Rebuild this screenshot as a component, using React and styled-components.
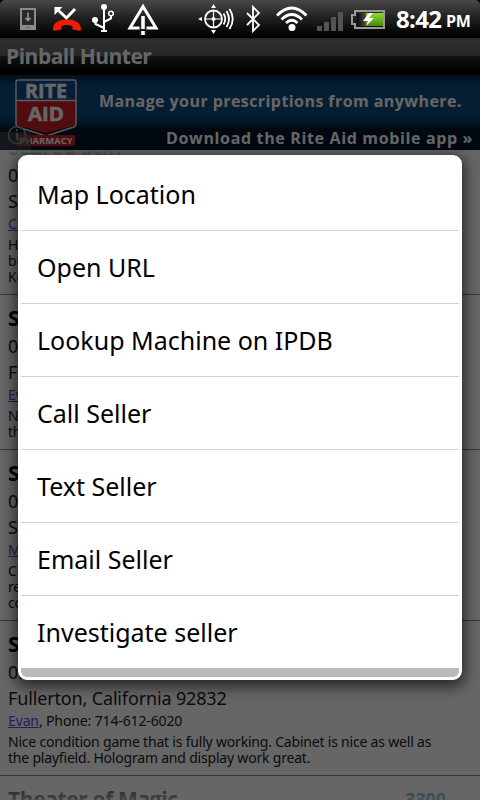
import styled, { createGlobalStyle } from 'styled-components'

const actions = [
  'Map Location',
  'Open URL',
  'Lookup Machine on IPDB',
  'Call Seller',
  'Text Seller',
  'Email Seller',
  'Investigate seller',
]

const listings = [
  {
    title: 'Scared Stiff',
    distance: '0',
    place: 'S',
    seller: 'Cl',
    lines: ['H', 'bu', 'Ke'],
  },
  {
    title: 'S',
    distance: '0',
    place: 'F',
    seller: 'Ev',
    lines: ['N', 'th'],
  },
  {
    title: 'S',
    distance: '0',
    place: 'S',
    seller: 'M',
    lines: ['Cl', 're', 'co'],
  },
  {
    title: 'S',
    distance: '0.',
    place: 'Fullerton, California 92832',
    seller: 'Evan',
    phone: '714-612-6020',
    lines: [
      'Nice condition game that is fully working. Cabinet is nice as well as',
      'the playfield. Hologram and display work great.',
    ],
  },
]

const StatusBar = () => (
  <Status>
    <LeftIcons>
      <svg width="160" height="38" viewBox="0 0 160 38" fill="none">
        <path d="M20 8h16v22H20z" fill="#8b8b8b" />
        <path d="M22 10h12v15H22z" fill="#292929" />
        <path d="M28 12.500v8M25.500 18 28 20.500l2.500-2.500" stroke="#999" strokeWidth="1.500" />
        <path d="M26 27.500h4" stroke="#666" />
        <path d="m58 10 8.500 8 8.500-9" stroke="#fff" strokeWidth="3" />
        <path d="M54.500 7h8l-8 8z" fill="#fff" />
        <path d="M53 29c0-5 4-9.500 14-9.500S81 24 81 29l-.5 2-8-1.500V26c-3-1.500-8-1.500-11 0v3.500l-8 1.500z" fill="#ee1c05" />
        <path d="M104 7v24M104 28l-8.500-4v-4M104 22l7-3.500V15" stroke="#fff" strokeWidth="2" />
        <path d="M101 31h6" stroke="#fff" strokeWidth="2" />
        <circle cx="104" cy="7" r="3" fill="#fff" />
        <circle cx="95" cy="20" r="3" fill="#fff" />
        <circle cx="111" cy="13.500" r="2.300" stroke="#fff" strokeWidth="1.500" />
        <path d="M143 6.500 130 28h26z" stroke="#fff" strokeWidth="3" />
        <path d="M143 16v19" stroke="#1a1a1a" strokeWidth="7" />
        <path d="M143 16v13M143 31v4" stroke="#fff" strokeWidth="3.600" />
      </svg>
    </LeftIcons>
    <RightIcons>
      <svg width="194" height="38" viewBox="196 0 194 38" fill="none">
        <circle cx="213.500" cy="19" r="8.500" stroke="#fff" strokeWidth="1.800" />
        <path d="M205 19h17M213.500 10.500v17" stroke="#fff" strokeWidth="1.200" />
        <circle cx="213.500" cy="19" r="2" fill="#fff" />
        <path d="m213.500 4 2.500 4h-5zM213.500 34l2.500-4h-5zM198 19l4-2v4z" fill="#fff" />
        <path d="M223.500 13.500q3.500 5.500 0 11M226.500 11q5 8 0 16M229.500 9q6.500 10 0 20" stroke="#fff" strokeWidth="1.800" />
        <path d="m247 13 12 12-6 6V7l6 6-12 12" stroke="#fff" strokeWidth="1.800" />
        <path d="M277 15.500q14.700-15 29.500 0M281.500 19.500q10.200-10 20.500 0M286 23q5.800-5.500 11.500 0" stroke="#fff" strokeWidth="2.800" />
        <circle cx="292" cy="27.500" r="3.500" fill="#fff" />
        <path d="M317 26h5v5h-5zM324 22h5v9h-5zM331 17h5v14h-5zM338 12h5v19h-5z" fill="#545454" />
        <path d="M355 11h29v17h-29v-4h-3v-9h3z" stroke="#999" strokeWidth="2" />
        <path d="M357 13h9v13h-9z" fill="url(#cell)" />
        <path d="M366 13h17v13h-17z" fill="url(#charge)" />
        <path d="m369 13-6 8h5l-2 5 8-8h-5l4-5z" fill="#fff" />
        <defs>
          <linearGradient id="cell">
            <stop stopColor="#080808" />
            <stop offset="1" stopColor="#505050" />
          </linearGradient>
          <linearGradient id="charge" x2="0" y2="1">
            <stop stopColor="#94d833" />
            <stop offset="1" stopColor="#428b08" />
          </linearGradient>
        </defs>
      </svg>
      <Clock>8:42</Clock>
      <Meridiem>PM</Meridiem>
    </RightIcons>
  </Status>
)

const Banner = () => (
  <Ad>
    <Logo>
      <svg width="78" height="75" viewBox="0 0 78 75">
        <path d="M16 5h60v45l-30 8-30-8z" fill="#124d91" />
        <path d="M16 26h60v24l-30 8-30-8z" fill="#cd202a" />
        <path d="M18 5h56q2 0 2 2v42q0 2-2 3l-28 9-28-9q-2-1-2-3V7q0-2 2-2zM16 25.500h60" fill="none" stroke="#dce3ea" strokeWidth="1.500" />
        <path d="M17 60h58v11H17z" fill="#cf1c2a" />
        <g fill="#fff" fontFamily="Open Sans, sans-serif" fontWeight="700" textAnchor="middle">
          <text x="46" y="22.500" fontSize="19" stroke="#fff" strokeWidth=".5" textLength="42" lengthAdjust="spacingAndGlyphs">RITE</text>
          <text x="46" y="46" fontSize="20" stroke="#fff" strokeWidth=".5" textLength="36" lengthAdjust="spacingAndGlyphs">AID</text>
          <text x="46" y="69" fontSize="9.500" textLength="53" lengthAdjust="spacingAndGlyphs">PHARMACY</text>
        </g>
        <path d="M0 57h31v18H0z" fill="#555" opacity=".6" />
        <circle cx="17" cy="60" r="8.500" fill="none" stroke="#909090" strokeWidth="1.500" />
        <path d="M17 58v7M17 54v2" stroke="#909090" strokeWidth="2" />
      </svg>
    </Logo>
    <Copy>
      <Tagline>Manage your prescriptions from anywhere.</Tagline>
      <Download>Download the Rite Aid mobile app »</Download>
    </Copy>
  </Ad>
)

const App = () => {
  return (
    <Screen>
      <GlobalStyle />
      <StatusBar />
      <Page>
        <TitleBar>Pinball Hunter</TitleBar>
        <Banner />
        <List>
          {listings.map((item, i) => (
            <Listing key={i}>
              <Name>{item.title}</Name>
              <Detail>{item.distance}</Detail>
              <Detail>{item.place}</Detail>
              <Seller>
                <a>{item.seller}</a>
                {item.phone && `, Phone: ${item.phone}`}
              </Seller>
              {item.lines.map((line) => (
                <Line key={line}>{line}</Line>
              ))}
            </Listing>
          ))}
          <Listing>
            <Name>
              Theater of Magic
              <Price>3300</Price>
            </Name>
          </Listing>
          <Fade $top />
          <Fade />
        </List>
        <Dim />
      </Page>
      <Dialog>
        {actions.map((action) => (
          <Action key={action}>{action}</Action>
        ))}
        <DialogFoot />
      </Dialog>
    </Screen>
  )
}

const GlobalStyle = createGlobalStyle`
  body {
    margin: 0;
    background: #000;
  }
  svg {
    display: block;
  }
`

const Screen = styled.div`
  position: relative;
  display: flex;
  flex-direction: column;
  width: 480px;
  height: 800px;
  overflow: hidden;
  font-family: "Noto Sans", "Open Sans", sans-serif;
  white-space: nowrap;
`

const Status = styled.div`
  display: flex;
  justify-content: space-between;
  height: 38px;
  flex: none;
  border-radius: 5px 5px 0 0;
  background: linear-gradient(#484848, #222 45%, #000 95%);
`

const LeftIcons = styled.div`
  width: 160px;
`

const RightIcons = styled.div`
  display: flex;
  width: 284px;
  color: #fff;
  font-family: "Open Sans", sans-serif;
  font-weight: 700;
`

const Clock = styled.div`
  width: 50px;
  padding-left: 6px;
  font-size: 24px;
  line-height: 38px;
  letter-spacing: -0.7px;
`

const Meridiem = styled.div`
  font-size: 16px;
  line-height: 43px;
  letter-spacing: -0.3px;
`

const Page = styled.div`
  position: relative;
  display: flex;
  flex-direction: column;
  flex: 1;
  min-height: 0;
`

const Dim = styled.div`
  position: absolute;
  inset: 0;
  background: rgba(0, 0, 0, 0.6);
`

const TitleBar = styled.div`
  height: 37px;
  flex: none;
  padding-left: 6px;
  background: linear-gradient(#55575a 0, #747578 5%, #626366 48%, #303133 50%, #000 90%);
  color: #fff;
  font-family: "Open Sans", sans-serif;
  font-size: 21px;
  font-weight: 700;
  line-height: 37px;
  letter-spacing: -0.5px;
`

const Ad = styled.div`
  display: flex;
  height: 75px;
  flex: none;
  background: linear-gradient(#072744, #0d4c80 15%, #0e4a7d 55%, #08294a 68%, #001429 72%, #00162e);
  color: #fff;
`

const Logo = styled.div`
  width: 99px;
`

const Copy = styled.div`
  font-family: "Open Sans", sans-serif;
  font-weight: 700;
`

const Tagline = styled.div`
  padding-top: 14px;
  font-size: 16px;
  line-height: 24px;
  letter-spacing: 0.43px;
`

const Download = styled.div`
  padding: 13px 0 0 67px;
  font-size: 16px;
  line-height: 24px;
  letter-spacing: 0.65px;
`

const List = styled.div`
  position: relative;
  flex: 1;
  min-height: 0;
  overflow: hidden;
  background: #fff;
  color: #000;

  > :first-child {
    margin-top: -26px;
  }
`

const Listing = styled.div`
  padding: 10px 8px 9px;
  border-bottom: 1px solid #858585;
`

const Name = styled.div`
  display: flex;
  justify-content: space-between;
  font-family: "Open Sans", sans-serif;
  font-size: 21px;
  font-weight: 700;
  line-height: 27px;
  padding-bottom: 1px;
  letter-spacing: -0.37px;
`

const Price = styled.span`
  padding-right: 26px;
  color: #007894;
  font-size: 18px;
  letter-spacing: -0.1px;
`

const Detail = styled.div`
  font-size: 18px;
  line-height: 26px;
  letter-spacing: -0.15px;
  color: #222;
`

const Seller = styled.div`
  margin-bottom: 3px;
  font-size: 14px;
  line-height: 20px;
  letter-spacing: -0.13px;
  color: #222;

  a {
    color: #584cea;
    text-decoration: underline;
  }
`

const Line = styled.div`
  font-size: 14px;
  line-height: 16px;
  letter-spacing: -0.2px;
  color: #222;
`

const Fade = styled.div`
  position: absolute;
  left: 0;
  right: 0;
  ${(props) => (props.$top ? 'top: 0;' : 'bottom: 0;')}
  height: ${(props) => (props.$top ? '8px' : '18px')};
  background: linear-gradient(${(props) => (props.$top ? '#fff, #fff9' : '#fff4, #fffa')});
`

const Dialog = styled.div`
  position: absolute;
  top: 155px;
  left: 18px;
  width: 438px;
  border: 3px solid #fff;
  border-radius: 9px;
  background: #fff;
  box-shadow: 0 4px 14px 3px rgba(0, 0, 0, 0.6);
`

const Action = styled.div`
  height: 72px;
  padding-left: 16px;
  border-bottom: 1px solid #d0d0d0;
  color: #000;
  font-size: 25px;
  line-height: 73px;

  &:nth-last-child(2) {
    border-bottom: 0;
  }
`

const DialogFoot = styled.div`
  height: 9px;
  border-radius: 0 0 6px 6px;
  background: #bababa;
`

export default App
